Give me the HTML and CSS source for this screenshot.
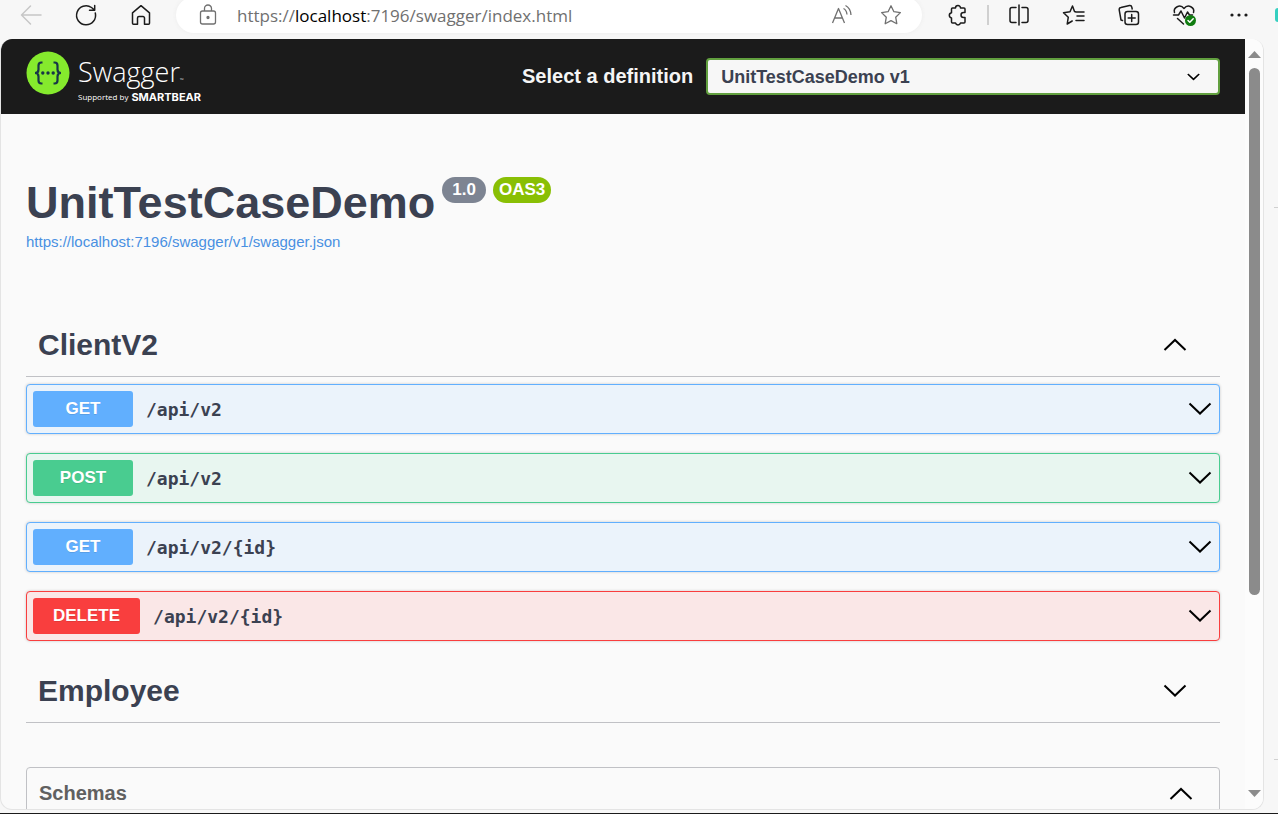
FILE: index.html
```html
<!DOCTYPE html>
<html lang="en">
<head>
<meta charset="utf-8">
<title>Swagger UI</title>
<link rel="stylesheet" href="styles.css">
</head>
<body>
<svg class="defs" aria-hidden="true">
  <symbol id="down" viewBox="0 0 24 14"><path d="M1.500 1.500 12 11.500 22.500 1.500"/></symbol>
  <symbol id="up" viewBox="0 0 24 14"><path d="M1.500 12 12 2 22.500 12"/></symbol>
</svg>
<header class="toolbar">
  <nav class="nav-buttons">
    <button class="tool muted" aria-label="Back"><svg viewBox="0 0 24 24"><path d="M22 12H2.500M11.500 3 2.500 12l9 9"/></svg></button>
    <button class="tool" aria-label="Refresh"><svg viewBox="0 0 24 24"><path d="M21.300 10A9.500 9.500 0 1 1 17.500 4.500L20.500 7M20.700 2.500V7.300H15.500"/></svg></button>
    <button class="tool" aria-label="Home"><svg viewBox="0 0 24 24"><path d="M3.500 9.800 12 2.700l8.500 7.100V20.200a1 1 0 0 1-1 1h-4V15a1.500 1.500 0 0 0-1.500-1.500h-4A1.500 1.500 0 0 0 8.500 15v6.200h-4a1 1 0 0 1-1-1z"/></svg></button>
  </nav>
  <div class="address">
    <svg class="glyph" viewBox="0 0 24 24"><rect x="4.500" y="8" width="15" height="13" rx="2"/><path d="M8.500 8V5.500a3.500 3.500 0 0 1 7 0V8"/><circle cx="12" cy="14.500" r="1" fill="currentColor"/></svg>
    <p class="url">https://<span class="host">localhost</span>:7196/swagger/index.html</p>
    <button class="glyph-button" aria-label="Read aloud"><svg class="glyph" viewBox="0 0 24 24"><path d="M2.500 20 8.500 5.500 14.500 20M4.600 15h7.800M13.500 5.500q3 1.500 3.500 6M15.500 2.500q5 2.500 5.500 9.500"/></svg></button>
    <button class="glyph-button" aria-label="Favorite"><svg class="glyph" viewBox="0 0 24 24"><path d="m12 2.800 2.900 5.900 6.500.900-4.700 4.600 1.100 6.500L12 17.600l-5.800 3.100 1.100-6.500L2.600 9.600l6.500-.900z"/></svg></button>
  </div>
  <nav class="tools">
    <button class="tool" aria-label="Extensions"><svg viewBox="0 0 24 24"><path d="M7.500 5h3a2.500 2.500 0 0 1 5 0H19a1 1 0 0 1 1 1v3.500h-1.500a2.500 2.500 0 0 0 0 5H20V19a1 1 0 0 1-1 1h-3.500a2.600 2.600 0 0 1-5 0h-3a1 1 0 0 1-1-1v-4a2.700 2.700 0 0 1 0-5.300V6a1 1 0 0 1 1-1z"/></svg></button>
    <span class="divider"></span>
    <button class="tool" aria-label="Split screen"><svg viewBox="0 0 24 24"><path d="M9 4.500H5a2 2 0 0 0-2 2v11a2 2 0 0 0 2 2h4M15 4.500h4a2 2 0 0 1 2 2v11a2 2 0 0 1-2 2h-4M12 2v20"/></svg></button>
    <button class="tool" aria-label="Favorites"><svg viewBox="0 0 24 24"><path d="M14 9h8M15 13h7M14 17.500h8M14 9 12.500 8.500 10.500 3 8 8.800l-6.500.900 4.800 4.500L5.200 21l5-3"/></svg></button>
    <button class="tool" aria-label="Collections"><svg viewBox="0 0 24 24"><rect x="8" y="8.500" width="13.500" height="13" rx="2.500"/><path d="M14.700 11.500v7M11.200 15h7M5.500 17.500 4 17 2.200 6.800A2 2 0 0 1 3.900 4.500L12.500 2.500a2 2 0 0 1 2.300 1.600l.4 1.900"/></svg></button>
    <button class="tool" aria-label="Browser essentials"><svg viewBox="0 0 24 24"><path d="M2.500 9.500C1 4.500 8 .500 12 5.500c4-5 11-1 9.500 4M5.500 15.500l6 5.500M1.500 12h5L9 8l3.500 7 3-6 2 3h3"/><circle class="ok" cx="18.500" cy="17.500" r="5.500"/><path class="tick" d="m16 17.500 1.800 1.800 3.400-3.500"/></svg></button>
    <button class="tool" aria-label="Settings and more"><svg viewBox="0 0 24 24"><g fill="currentColor" stroke="none"><circle cx="5" cy="12" r="1.600"/><circle cx="12" cy="12" r="1.600"/><circle cx="19" cy="12" r="1.600"/></g></svg></button>
  </nav>
  <span class="copilot"></span>
</header>
<div class="workspace">
  <div class="view">
    <main class="page">
      <div class="topbar">
        <a class="logo" href="#" aria-label="Swagger, supported by SmartBear">
          <svg class="mark" viewBox="0 0 44 44"><circle cx="22" cy="22" r="21.500" fill="#85ea2d"/><g fill="none" stroke="#173647" stroke-width="2.200"><path d="M16.500 11.500h-1.200q-2.800 0-2.800 3v4q0 3.500-3.500 3.500 3.500 0 3.500 3.500v4q0 3 2.800 3h1.200M27.500 11.500h1.200q2.800 0 2.800 3v4q0 3.500 3.500 3.500-3.500 0-3.500 3.500v4q0 3-2.800 3h-1.200"/></g><g fill="#173647"><circle cx="16.800" cy="22" r="1.700"/><circle cx="22" cy="22" r="1.700"/><circle cx="27.200" cy="22" r="1.700"/></g></svg>
          <span class="wordmark">
            <span class="name">Swagger<small>™</small></span>
            <span class="support">Supported by <b>SMARTBEAR</b></span>
          </span>
        </a>
        <div class="definition">
          <label for="definition">Select a definition</label>
          <div class="picker">
            <select id="definition"><option>UnitTestCaseDemo v1</option></select>
            <svg class="caret" viewBox="0 0 24 14"><use href="#down"/></svg>
          </div>
        </div>
      </div>
      <div class="content">
        <div class="title">
          <h1>UnitTestCaseDemo</h1>
          <span class="badge">1.0</span>
          <span class="badge oas">OAS3</span>
        </div>
        <a class="spec" href="#">https://localhost:7196/swagger/v1/swagger.json</a>
        <section>
          <div class="tag"><h2>ClientV2</h2><button class="toggle" aria-label="Collapse ClientV2"><svg class="chevron"><use href="#up"/></svg></button></div>
          <div class="operations">
            <button class="op get"><span class="method">GET</span><code>/api/v2</code><svg class="chevron"><use href="#down"/></svg></button>
            <button class="op post"><span class="method">POST</span><code>/api/v2</code><svg class="chevron"><use href="#down"/></svg></button>
            <button class="op get"><span class="method">GET</span><code>/api/v2/{id}</code><svg class="chevron"><use href="#down"/></svg></button>
            <button class="op delete"><span class="method">DELETE</span><code>/api/v2/{id}</code><svg class="chevron"><use href="#down"/></svg></button>
          </div>
        </section>
        <section>
          <div class="tag"><h2>Employee</h2><button class="toggle" aria-label="Expand Employee"><svg class="chevron"><use href="#down"/></svg></button></div>
        </section>
        <section class="schemas"><h2>Schemas</h2><button class="toggle" aria-label="Collapse Schemas"><svg class="chevron"><use href="#up"/></svg></button></section>
      </div>
    </main>
    <div class="scrollbar">
      <svg class="arrow" viewBox="0 0 13 7"><path d="M0 7 6.500 0 13 7z"/></svg>
      <div class="track"><div class="thumb"></div></div>
      <svg class="arrow" viewBox="0 0 13 7"><path d="M0 0h13L6.500 7z"/></svg>
    </div>
  </div>
  <aside class="rail"><hr><hr></aside>
</div>
</body>
</html>
```

FILE: styles.css
```css
* { box-sizing: border-box; }
body {
  margin: 0;
  height: 100vh;
  display: flex;
  flex-direction: column;
  overflow: hidden;
  background: #f7f7f7;
  border-bottom: 1px solid #1b1b1b;
  font-family: "Liberation Sans", Arial, sans-serif;
  color: #3b4151;
}
h1, h2, p { margin: 0; }
button { border: 0; padding: 0; background: none; color: inherit; font: inherit; }
.defs { display: none; }

/* Browser toolbar */
.toolbar { display: flex; align-items: flex-start; padding-left: 19px; height: 39px; flex: none; }
.nav-buttons { display: flex; gap: 31px; }
.tool { width: 24px; height: 30px; display: grid; place-items: center; color: #1b1b1b; }
.tool svg { width: 24px; height: 24px; fill: none; stroke: currentColor; stroke-width: 1.5; stroke-linejoin: round; stroke-linecap: round; }
.muted { color: #c6c6c6; }
.tool .ok { fill: #107c10; stroke: none; }
.tool .tick { stroke: #fff; }
.address {
  flex: 1;
  display: flex;
  align-items: center;
  height: 36px;
  margin: -3px 0 0 23px;
  padding: 0 19px 0 20px;
  background: #fff;
  border-radius: 18px;
  box-shadow: 0 0 4px #ececec;
  color: #707070;
}
.glyph { width: 24px; height: 24px; display: block; fill: none; stroke: currentColor; stroke-width: 1.3; stroke-linejoin: round; }
.glyph-button { margin-left: 25px; }
.url { flex: 1; margin-left: 17px; font: 17px "Open Sans", sans-serif; white-space: nowrap; }
.host { color: #000; }
.tools { display: flex; gap: 31px; padding: 0 24px 0 23px; align-items: center; height: 30px; }
.divider { width: 2px; height: 20px; margin: 0 -13px 0 -13px; background: #d0d0d0; }
.copilot { width: 3px; height: 14px; margin-top: 8px; border-radius: 3px 0 0 3px; background: #35cfc0; }

/* Window below the toolbar */
.workspace { flex: 1; min-height: 0; display: flex; padding-bottom: 3px; }
.view {
  flex: 1;
  display: flex;
  overflow: hidden;
  background: #fafafa;
  border: solid #e4e4e4;
  border-width: 0 1px 1px;
  border-radius: 12px;
}
.page { flex: 1; overflow: hidden; }
.scrollbar { width: 18px; display: flex; flex-direction: column; align-items: center; padding: 12px 0; background: #fcfcfc; }
.arrow { width: 13px; height: 7px; fill: #8b8b8b; }
.track { flex: 1; width: 11px; padding-top: 10px; }
.thumb { height: 73%; border-radius: 6px; background: #8b8b8b; }
.rail { width: 14px; padding: 168px 0 50px 10px; display: flex; flex-direction: column; justify-content: space-between; }
.rail hr { width: 4px; margin: 0; border: 0; border-top: 1px solid #d0d0d0; }

/* Swagger top bar */
.topbar { display: flex; align-items: center; justify-content: space-between; height: 75px; padding: 0 25px; background: #1b1b1b; color: #f5f5f5; }
.logo { display: flex; gap: 8px; padding-top: 2px; color: #fff; text-decoration: none; }
.mark { width: 44px; height: 44px; margin-top: -2px; }
.wordmark { display: flex; flex-direction: column; font-family: "Open Sans", sans-serif; }
.name { font-size: 27px; font-weight: 300; line-height: 38px; height: 38px; }
.name small { font-size: 5px; line-height: 5px; }
.support { display: flex; align-items: center; gap: 3px; font-size: 8px; line-height: 12px; }
.support b { font: bold 11px/12px Inter, sans-serif; }
.definition { flex: 0 1 698px; display: flex; align-items: center; gap: 13px; }
.definition label { font-size: 20px; font-weight: bold; white-space: nowrap; }
.picker { flex: 1; position: relative; }
.picker select {
  appearance: none;
  display: block;
  width: 100%;
  height: 37px;
  padding: 0 13px;
  border: 2px solid #62a03f;
  border-radius: 4px;
  background: #f7f7f7;
  color: #3b4151;
  font: bold 18px "Liberation Sans", Arial, sans-serif;
}
.caret { position: absolute; right: 20px; top: 15px; width: 13px; height: 8px; fill: none; stroke: #000; stroke-width: 3; pointer-events: none; }

/* API description */
.content { padding: 63px 25px 0; }
.title { display: flex; align-items: flex-start; gap: 7px; }
.title h1 { font-size: 45px; line-height: 52px; }
.badge { padding: 0 10px; border-radius: 13px; background: #7d8492; color: #fff; font-size: 17px; font-weight: bold; line-height: 25px; height: 26px; }
.badge.oas { padding: 0 6px; background: #89bf04; }
.spec { display: block; margin: 3px 0 61px; font-size: 15px; line-height: 20px; color: #4990e2; text-decoration: none; }
.tag { display: flex; align-items: center; justify-content: space-between; height: 64px; padding: 0 33px 0 12px; border-bottom: 1px solid #c0c1c5; }
.tag h2 { font-size: 30px; }
.toggle { display: block; }
.chevron { display: block; width: 24px; height: 14px; fill: none; stroke: #000; stroke-width: 2; }
.operations { display: flex; flex-direction: column; gap: 19px; padding: 7px 0 18px; }
.op { display: flex; align-items: center; height: 50px; padding: 0 7px 0 6px; border: 1px solid; border-radius: 4px; box-shadow: 0 0 3px #0003; }
.op .chevron { margin-left: auto; }
.method { min-width: 100px; padding: 0 20px; border-radius: 3px; color: #fff; font-size: 17px; font-weight: bold; line-height: 36px; text-align: center; text-shadow: 0 1px 0 #0000001a; }
.op code { margin-left: 13px; color: #3b4151; font: bold 18px "DejaVu Sans Mono", monospace; }
.get { border-color: #61affe; background: #ebf3fb; }
.get .method { background: #61affe; }
.post { border-color: #49cc90; background: #e8f6f0; }
.post .method { background: #49cc90; }
.delete { border-color: #f93e3e; background: #fae7e7; }
.delete .method { background: #f93e3e; }
.schemas { display: flex; align-items: center; justify-content: space-between; height: 53px; margin-top: 44px; padding: 0 26px 0 12px; border: 1px solid #c0c1c5; border-radius: 4px; }
.schemas h2 { font-size: 20px; color: #606060; }
```
